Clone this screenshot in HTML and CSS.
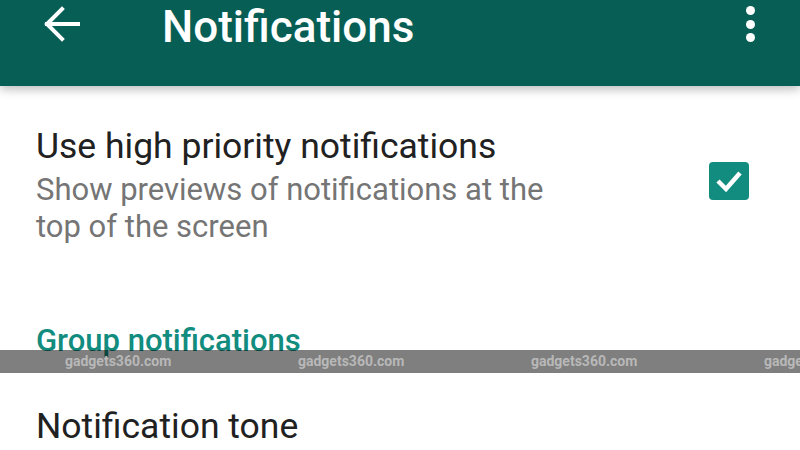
FILE: index.html
```html
<!DOCTYPE html>
<html>
<head>
<meta charset="utf-8">
<link rel="stylesheet" href="styles.css">
</head>
<body>
<div class="screen">
  <header class="appbar">
    <svg class="back" width="36" height="36" viewBox="0 0 36 36"><path d="M35 18 H3 M18 3 L3 18 L18 33" fill="none" stroke="#fff" stroke-width="4" stroke-linecap="square"/></svg>
    <h1 class="title">Notifications</h1>
    <div class="kebab"><span></span><span></span><span></span></div>
  </header>
  <main class="list">
    <div class="pref">
      <div class="pref-text">
        <div class="pref-title">Use high priority notifications</div>
        <div class="pref-sub">Show previews of notifications at the<br>top of the screen</div>
      </div>
      <div class="check">
        <svg width="40" height="38" viewBox="0 0 40 38"><rect x="0" y="0" width="40" height="38" rx="4" fill="#128C7E"/><path d="M9 19 L17 27 L31 11" fill="none" stroke="#fff" stroke-width="4.5"/></svg>
      </div>
    </div>
    <div class="group">Group notifications</div>
    <div class="pref-title tone">Notification tone</div>
  </main>
  <div class="watermark">
    <span>gadgets360.com</span><span>gadgets360.com</span><span>gadgets360.com</span><span>gadgets360.com</span>
  </div>
</div>
</body>
</html>
```

FILE: styles.css
```css
html, body {
  margin: 0;
  padding: 0;
  background: #fff;
}
.screen {
  position: relative;
  width: 800px;
  height: 450px;
  overflow: hidden;
  font-family: Roboto, "Noto Sans", sans-serif;
}
.appbar {
  height: 86px;
  background: #075E54;
  display: flex;
  align-items: flex-start;
  box-shadow: 0 3px 10px rgba(0,0,0,0.28);
  position: relative;
  z-index: 1;
}
.back {
  margin: 6px 0 0 44px;
  flex: none;
}
.title {
  margin: 2px 0 0 82px;
  font-size: 44px;
  line-height: 50px;
  font-weight: 500;
  color: #fff;
  flex: 1;
}
.kebab {
  display: flex;
  flex-direction: column;
  gap: 4.5px;
  margin: 6px 45px 0 0;
}
.kebab span {
  width: 9px;
  height: 9px;
  border-radius: 50%;
  background: #fff;
}
.list {
  padding: 40px 51px 0 36px;
}
.pref {
  display: flex;
  justify-content: space-between;
  align-items: flex-start;
}
.pref-title {
  font-size: 35.5px;
  line-height: 40px;
  color: #212121;
}
.pref-sub {
  margin-top: 5px;
  font-size: 31px;
  line-height: 37px;
  color: #757575;
}
.check {
  margin-top: 36px;
  line-height: 0;
}
.group {
  margin-top: 78px;
  font-size: 31px;
  line-height: 36px;
  font-weight: 500;
  color: #128C7E;
}
.tone {
  margin-top: 47px;
}
.watermark {
  position: absolute;
  left: 0;
  top: 350px;
  width: 800px;
  height: 23px;
  background: rgba(0,0,0,0.5);
  display: flex;
  padding-left: 65px;
  white-space: nowrap;
  overflow: hidden;
}
.watermark span {
  flex: none;
  width: 233px;
  font-family: Roboto, sans-serif;
  font-weight: 700;
  font-size: 14px;
  line-height: 23px;
  color: #b8b8b8;
}
```
